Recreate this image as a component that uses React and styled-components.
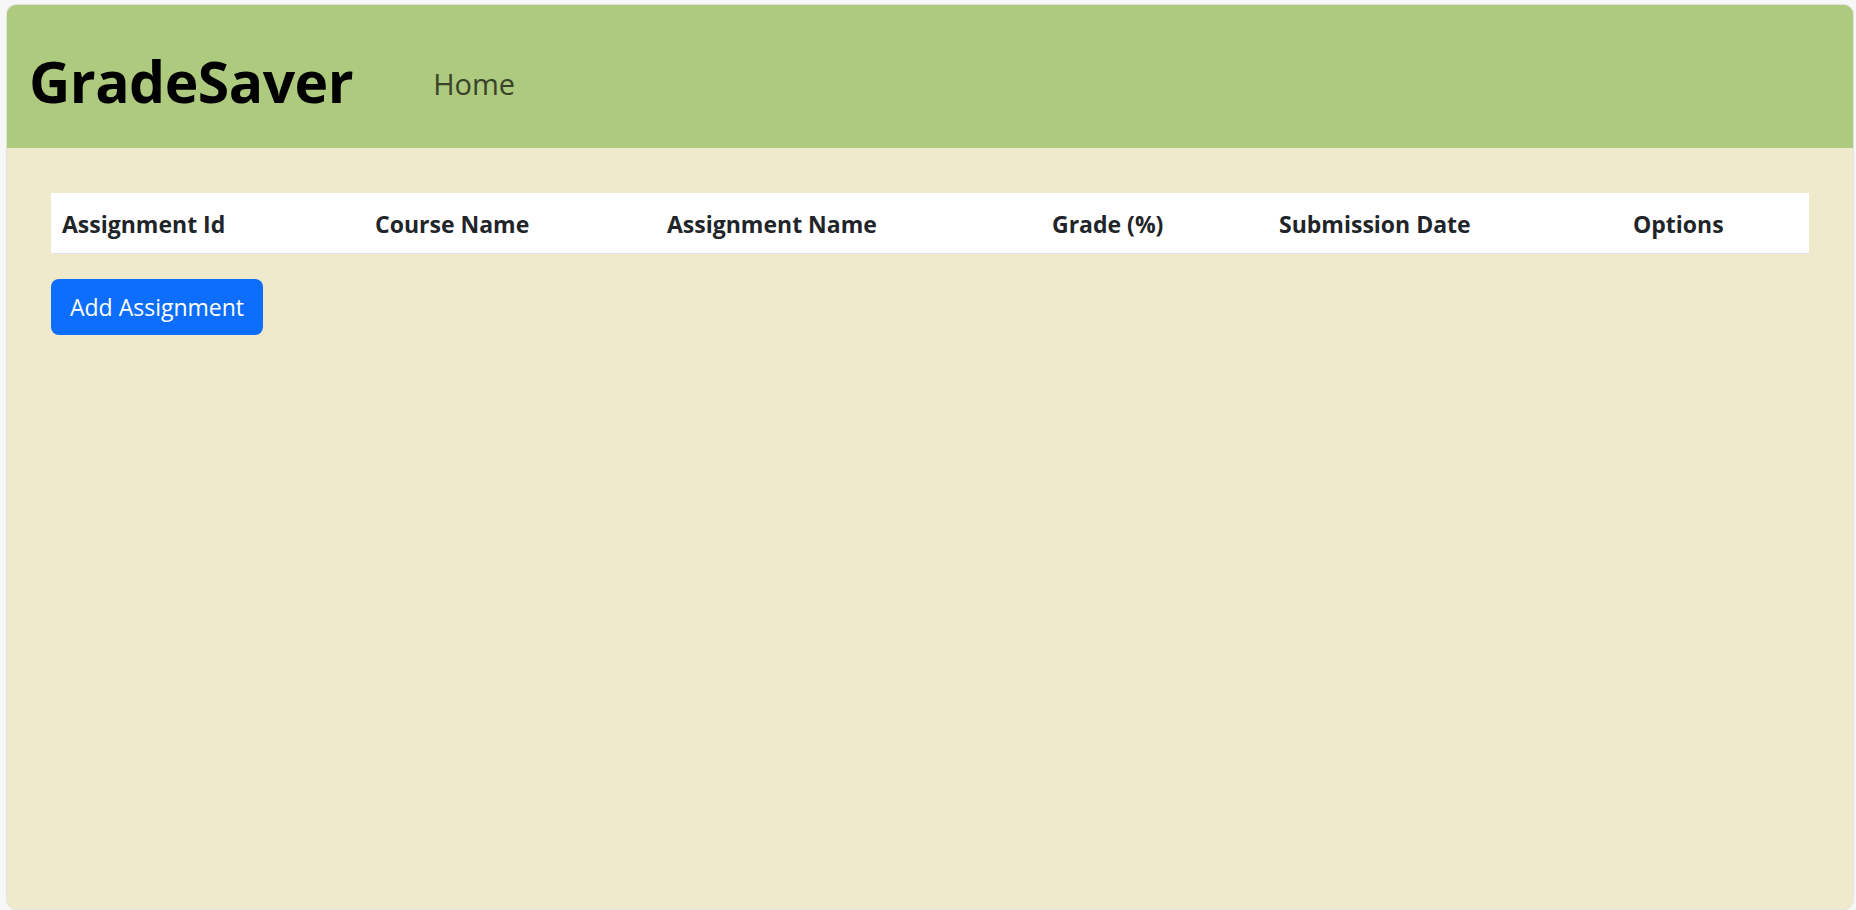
import React from 'react';
import styled, { createGlobalStyle } from 'styled-components';

const GlobalStyle = createGlobalStyle`
  html, body {
    margin: 0;
    padding: 0;
    background: #f7f7f7;
    font-family: "Open Sans", "Noto Sans", sans-serif;
    color: #212529;
  }
  * {
    box-sizing: border-box;
  }
`;

const Page = styled.div`
  padding: 4px 2px 0 6px;
  height: 910px;
  overflow: hidden;
`;

const Card = styled.div`
  background: #eeeacb;
  border: 1px solid #e3e3e3;
  border-radius: 10px;
  min-height: 906px;
  overflow: hidden;
`;

const Header = styled.header`
  display: flex;
  align-items: center;
  gap: 80px;
  height: 143px;
  padding: 8px 0 0 22px;
  background: #adca7e;
`;

const Brand = styled.h1`
  margin: 0;
  font-size: 57px;
  font-weight: 700;
  color: #000;
  letter-spacing: -0.5px;
`;

const NavLink = styled.a`
  font-size: 29px;
  color: #38432a;
  text-decoration: none;
  margin-top: 6px;
  cursor: pointer;
`;

const Content = styled.main`
  padding: 45px 44px 0 44px;
`;

const Table = styled.table`
  width: 100%;
  border-collapse: collapse;
  table-layout: fixed;
  margin-bottom: 25px;
`;

const HeadCell = styled.th`
  width: ${props => props.$width}px;
  height: 60px;
  padding: 2px 11px 0;
  background: #fff;
  border-bottom: 1px solid #dee2e6;
  text-align: left;
  font-size: 23px;
  font-weight: 700;
  color: #212529;
  white-space: nowrap;
`;

const Button = styled.button`
  height: 56px;
  padding: 0 19px;
  border: none;
  border-radius: 8px;
  background: #0d6efd;
  color: #fff;
  font-family: inherit;
  font-size: 23px;
  cursor: pointer;
  &:hover {
    background: #0b5ed7;
  }
`;

const columns = [
  { label: 'Assignment Id', width: 313 },
  { label: 'Course Name', width: 292 },
  { label: 'Assignment Name', width: 385 },
  { label: 'Grade (%)', width: 227 },
  { label: 'Submission Date', width: 354 },
  { label: 'Options', width: 187 },
];

const App = () => {
  return (
    <Page>
      <GlobalStyle />
      <Card>
        <Header>
          <Brand>GradeSaver</Brand>
          <NavLink>Home</NavLink>
        </Header>
        <Content>
          <Table>
            <thead>
              <tr>
                {columns.map(({ label, width }) => (
                  <HeadCell key={label} $width={width}>
                    {label}
                  </HeadCell>
                ))}
              </tr>
            </thead>
            <tbody />
          </Table>
          <Button>Add Assignment</Button>
        </Content>
      </Card>
    </Page>
  );
};

export default App;
